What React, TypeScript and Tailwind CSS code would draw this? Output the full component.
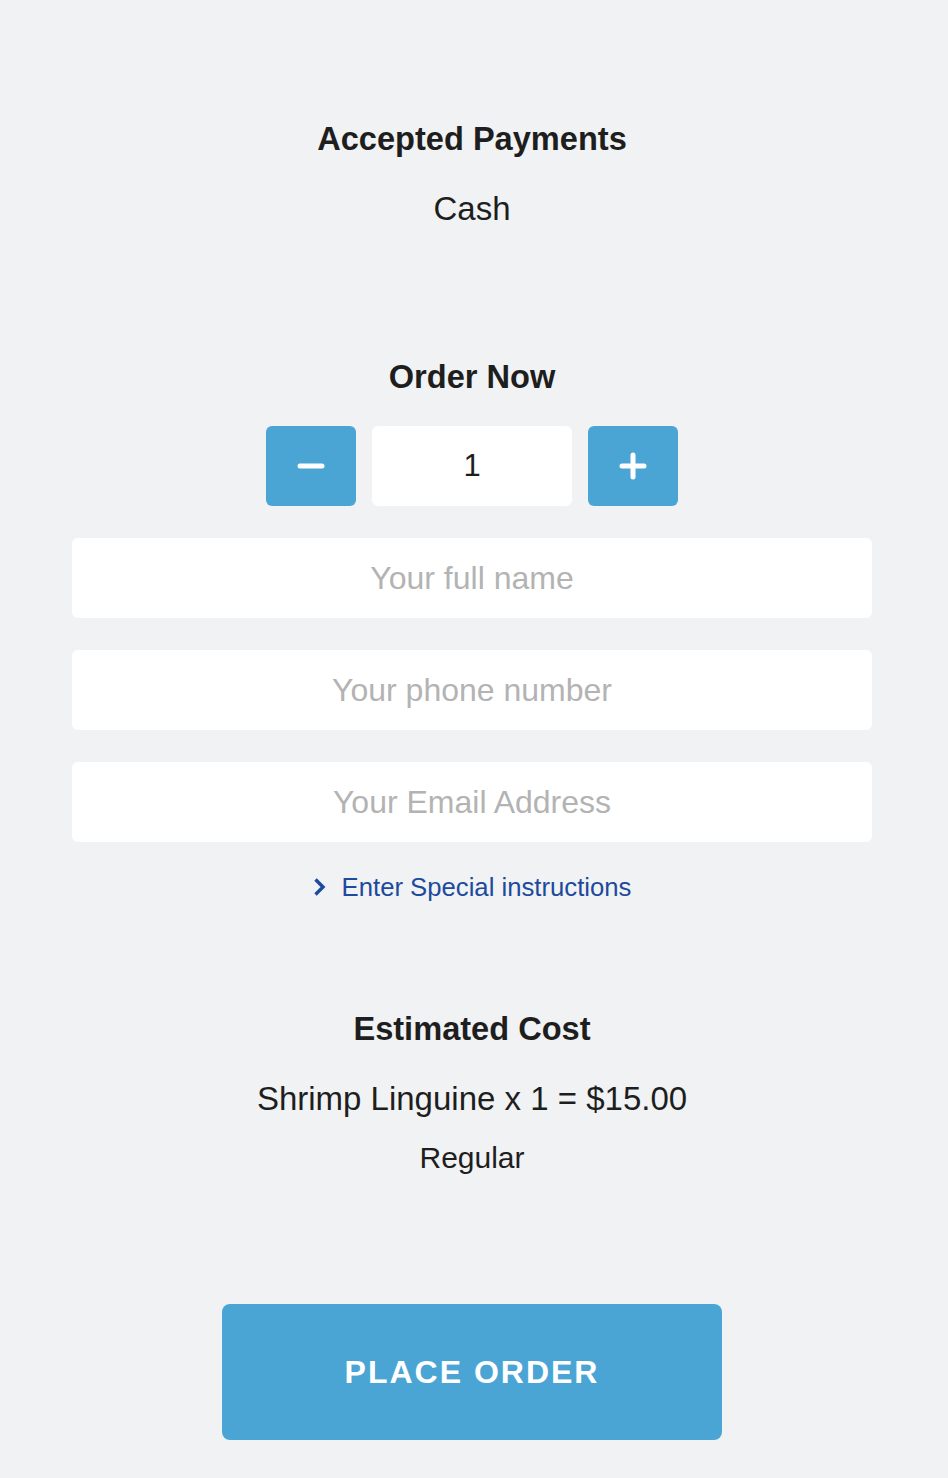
import { useState } from "react";

export default function App() {
  const [qty, setQty] = useState(1);
  const price = 15;

  return (
    <div className="min-h-screen bg-[#f1f2f4] text-[#1e1e1e] font-['Liberation_Sans',Arial,sans-serif] flex flex-col items-center pt-[119px] pb-[38px] pr-1">
      <h2 className="text-[32.6px] leading-[40px] font-bold">Accepted Payments</h2>
      <p className="mt-[30px] text-[33px] leading-[40px]">Cash</p>

      <h2 className="mt-[128px] text-[32.6px] leading-[40px] font-bold">Order Now</h2>

      <div className="mt-[29px] flex gap-4">
        <button
          onClick={() => setQty((q) => Math.max(1, q - 1))}
          className="w-[90px] h-20 rounded-md bg-[#4aa5d4] flex items-center justify-center"
        >
          <svg width="28" height="28" viewBox="0 0 28 28">
            <path d="M3 14h22" stroke="#fff" strokeWidth="5" strokeLinecap="round" />
          </svg>
        </button>
        <input
          value={qty}
          onChange={(e) => setQty(Number(e.target.value) || 1)}
          className="w-[200px] h-20 rounded-md bg-white text-center text-[31px] outline-none"
        />
        <button
          onClick={() => setQty((q) => q + 1)}
          className="w-[90px] h-20 rounded-md bg-[#4aa5d4] flex items-center justify-center"
        >
          <svg width="28" height="28" viewBox="0 0 28 28">
            <path d="M3 14h22M14 3v22" stroke="#fff" strokeWidth="5" strokeLinecap="round" />
          </svg>
        </button>
      </div>

      <div className="mt-8 w-[800px] flex flex-col gap-8">
        <input
          placeholder="Your full name"
          className="h-20 rounded-md bg-white text-center text-[32px] outline-none placeholder:text-[#b3b3b3]"
        />
        <input
          placeholder="Your phone number"
          className="h-20 rounded-md bg-white text-center text-[32px] outline-none placeholder:text-[#b3b3b3]"
        />
        <input
          placeholder="Your Email Address"
          className="h-20 rounded-md bg-white text-center text-[32px] outline-none placeholder:text-[#b3b3b3]"
        />
      </div>

      <button className="mt-[27px] h-9 flex items-center gap-[15px] text-[25.7px] text-[#1d4a9c]">
        <svg width="14" height="20" viewBox="0 0 14 20">
          <path d="M2.5 2.5l7.5 7.5-7.5 7.5" fill="none" stroke="#1d4a9c" strokeWidth="3.4" />
        </svg>
        Enter Special instructions
      </button>

      <h2 className="mt-[104px] text-[32.6px] leading-[40px] font-bold">Estimated Cost</h2>
      <p className="mt-[30px] text-[33px] leading-[40px]">
        Shrimp Linguine x {qty} = ${(price * qty).toFixed(2)}
      </p>
      <p className="mt-[21px] text-[30px] leading-9">Regular</p>

      <button className="mt-[128px] w-[500px] h-[136px] rounded-lg bg-[#4aa5d4] text-white text-[32px] font-bold tracking-[2px]">
        PLACE ORDER
      </button>
    </div>
  );
}
